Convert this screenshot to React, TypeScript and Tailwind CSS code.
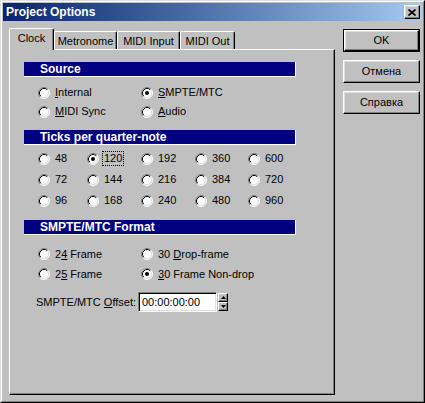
import React from "react";

const Radio = ({ checked }: { checked?: boolean }) => (
  <svg width="12" height="12" viewBox="0 0 12 12" className="shrink-0">
    <circle cx="6" cy="6" r="5" fill="#fff" />
    <path d="M2.11 9.89 A5.5 5.5 0 0 1 9.89 2.11" stroke="#808080" fill="none" />
    <path d="M9.89 2.11 A5.5 5.5 0 0 1 2.11 9.89" stroke="#fff" fill="none" />
    <path d="M2.82 9.18 A4.5 4.5 0 0 1 9.18 2.82" stroke="#000" fill="none" />
    <path d="M9.18 2.82 A4.5 4.5 0 0 1 2.82 9.18" stroke="#dfdfdf" fill="none" />
    {checked && <circle cx="6" cy="6" r="2" fill="#000" />}
  </svg>
);

function Opt({
  label,
  checked,
  focus,
}: {
  label: React.ReactNode;
  checked?: boolean;
  focus?: boolean;
}) {
  return (
    <div className="flex items-center">
      <Radio checked={checked} />
      {focus ? (
        <span className="ml-[3px] border border-dotted border-black px-px leading-[13px]">{label}</span>
      ) : (
        <span className="ml-[5px] leading-[13px]">{label}</span>
      )}
    </div>
  );
}

const Header = ({ children, className = "" }: { children: React.ReactNode; className?: string }) => (
  <div
    className={`h-[15px] w-[272px] bg-[#000080] border-r border-b border-r-white border-b-white pl-[16px] text-white font-bold text-[12px] leading-[14px] ${className}`}
  >
    {children}
  </div>
);

const Btn = ({ children, def }: { children: React.ReactNode; def?: boolean }) =>
  def ? (
    <div className="w-[77px] h-[23px] border border-black">
      <div className="w-full h-full border border-t-white border-l-white border-r-black border-b-black shadow-[inset_-1px_-1px_#808080,inset_1px_1px_#dfdfdf] flex items-center justify-center text-[11px] leading-[13px]">
        {children}
      </div>
    </div>
  ) : (
    <div className="w-[77px] h-[23px] border border-t-white border-l-white border-r-black border-b-black shadow-[inset_-1px_-1px_#808080,inset_1px_1px_#dfdfdf] flex items-center justify-center text-[11px] leading-[13px]">
      {children}
    </div>
  );

const Tab = ({ children, w, selected }: { children: React.ReactNode; w: string; selected?: boolean }) =>
  selected ? (
    <div
      className={`${w} relative z-10 h-[22px] -mb-px bg-[#c0c0c0] border-t border-l border-r border-t-white border-l-white border-r-black shadow-[inset_-1px_0_#808080] rounded-t-[2px] flex justify-center pt-[3px] text-[11px] leading-[13px]`}
    >
      {children}
    </div>
  ) : (
    <div
      className={`${w} h-[18px] bg-[#c0c0c0] border-t border-l border-r border-t-white border-l-white border-r-black shadow-[inset_-1px_0_#808080] rounded-t-[2px] flex justify-center pt-[3px] text-[11px] leading-[13px]`}
    >
      {children}
    </div>
  );

const ticks = [
  ["48", "120", "192", "360", "600"],
  ["72", "144", "216", "384", "720"],
  ["96", "168", "240", "480", "960"],
];

export default function App() {
  return (
    <div className="w-[425px] h-[403px] bg-[#c0c0c0] border border-t-[#dfdfdf] border-l-[#dfdfdf] border-r-black border-b-black text-black text-[11px] [font-family:'Liberation_Sans',Arial,sans-serif]">
      <div className="h-full border border-t-white border-l-white border-r-[#808080] border-b-[#808080] p-px flex flex-col">
        {/* title bar */}
        <div className="h-[18px] shrink-0 bg-linear-to-r from-[#0a246a] to-[#a6caf0] flex items-center justify-between pl-[3px] pr-[2px]">
          <span className="text-white font-bold text-[12px] leading-[14px]">Project Options</span>
          <div className="w-[16px] h-[14px] bg-[#c0c0c0] border border-t-white border-l-white border-r-black border-b-black shadow-[inset_-1px_-1px_#808080,inset_1px_1px_#dfdfdf] flex items-center justify-center">
            <svg width="8" height="7" viewBox="0 0 8 7">
              <path d="M0.5 0.5 L7.5 6.5 M7.5 0.5 L0.5 6.5" stroke="#000" strokeWidth="1.6" />
            </svg>
          </div>
        </div>

        {/* body */}
        <div className="flex-1 flex pt-[7px] pl-[6px] pb-[5px]">
          <div className="w-[326px] flex flex-col">
            <div className="h-[21px] flex items-end shrink-0">
              <Tab w="w-[45px]" selected>
                Clock
              </Tab>
              <Tab w="w-[63px]">Metronome</Tab>
              <Tab w="w-[63px]">MIDI Input</Tab>
              <Tab w="w-[55px]">MIDI Out</Tab>
            </div>
            <div className="flex-1 border border-t-white border-l-white border-r-black border-b-black shadow-[inset_-1px_-1px_#808080] pl-[14px] pt-[12px]">
              <Header>Source</Header>
              <div className="mt-[6px] pl-[14px] grid grid-cols-[103px_1fr] auto-rows-[19px] items-center">
                <Opt label={<><u>I</u>nternal</>} />
                <Opt checked label={<><u>S</u>MPTE/MTC</>} />
                <Opt label={<><u>M</u>IDI Sync</>} />
                <Opt label={<><u>A</u>udio</>} />
              </div>

              <Header className="mt-[9px]">Ticks per quarter-note</Header>
              <div className="mt-[3px] pl-[14px] grid grid-cols-[49px_54px_54px_53px_1fr] auto-rows-[21px] items-center">
                {ticks.flat().map((t) => (
                  <Opt key={t} label={t} checked={t === "120"} focus={t === "120"} />
                ))}
              </div>

              <Header className="mt-[9px]">SMPTE/MTC Format</Header>
              <div className="mt-[9px] pl-[14px] grid grid-cols-[103px_1fr] auto-rows-[20px] items-center">
                <Opt label={<>2<u>4</u> Frame</>} />
                <Opt label={<>30 <u>D</u>rop-frame</>} />
                <Opt label={<>2<u>5</u> Frame</>} />
                <Opt checked label={<><u>3</u>0 Frame Non-drop</>} />
              </div>

              <div className="mt-[8px] flex items-center pl-[12px]">
                <span className="w-[102px] leading-[13px]">
                  SMPTE/MTC <u>O</u>ffset:
                </span>
                <div className="w-[79px] h-[20px] bg-white border border-t-[#808080] border-l-[#808080] border-b-white border-r-white shadow-[inset_1px_1px_#000,inset_-1px_-1px_#dfdfdf] flex items-center pl-[3px] leading-[13px]">
                  00:00:00:00
                </div>
                <div className="ml-px flex flex-col">
                  <div className="w-[10px] h-[9px] border border-t-white border-l-white border-r-black border-b-black shadow-[inset_-1px_-1px_#808080] flex items-center justify-center">
                    <svg width="5" height="3" viewBox="0 0 5 3">
                      <path d="M2.5 0 L5 3 L0 3 Z" fill="#000" />
                    </svg>
                  </div>
                  <div className="w-[10px] h-[9px] border border-t-white border-l-white border-r-black border-b-black shadow-[inset_-1px_-1px_#808080] flex items-center justify-center">
                    <svg width="5" height="3" viewBox="0 0 5 3">
                      <path d="M0 0 L5 0 L2.5 3 Z" fill="#000" />
                    </svg>
                  </div>
                </div>
              </div>
            </div>
          </div>

          <div className="ml-[8px] mt-px flex flex-col gap-[8px]">
            <Btn def>OK</Btn>
            <Btn>Отмена</Btn>
            <Btn>Справка</Btn>
          </div>
        </div>
      </div>
    </div>
  );
}
